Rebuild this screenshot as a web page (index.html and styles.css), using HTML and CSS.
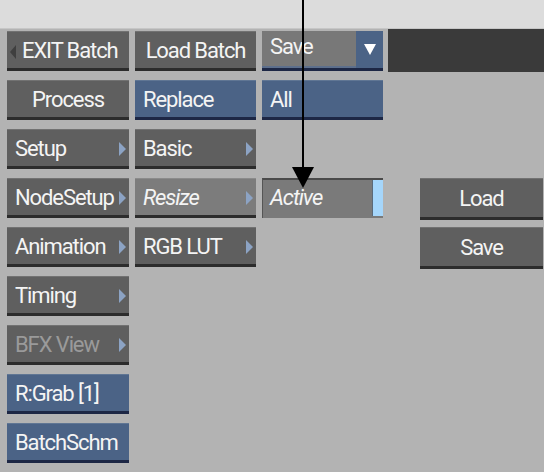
FILE: index.html
```html
<!DOCTYPE html>
<html>
<head>
<meta charset="utf-8">
<link rel="stylesheet" href="styles.css">
</head>
<body>
<div class="topbar"></div>
<div class="panel">
  <div class="btn gray exit"><span class="ltri"></span>EXIT Batch</div>
  <div class="btn gray center">Load Batch</div>
  <div class="dropdown"><span class="dd-field">Save</span><span class="dd-btn"><span class="dtri"></span></span></div>
  <div class="darkbox"></div>

  <div class="btn gray center">Process</div>
  <div class="btn blue">Replace</div>
  <div class="btn blue">All</div>
  <div class="empty"></div>

  <div class="btn gray menu">Setup<span class="rtri"></span></div>
  <div class="btn gray menu">Basic<span class="rtri"></span></div>
  <div class="empty"></div>
  <div class="empty"></div>

  <div class="btn gray menu">NodeSetup<span class="rtri"></span></div>
  <div class="btn light menu italic">Resize<span class="rtri"></span></div>
  <div class="field italic">Active<span class="bar"></span></div>
  <div class="side"><div class="btn gray center sidebtn">Load</div></div>

  <div class="btn gray menu">Animation<span class="rtri"></span></div>
  <div class="btn gray menu">RGB LUT<span class="rtri"></span></div>
  <div class="empty"></div>
  <div class="side"><div class="btn gray center sidebtn">Save</div></div>

  <div class="btn gray menu">Timing<span class="rtri"></span></div>
  <div class="empty"></div><div class="empty"></div><div class="empty"></div>

  <div class="btn gray menu disabled">BFX View<span class="rtri"></span></div>
  <div class="empty"></div><div class="empty"></div><div class="empty"></div>

  <div class="btn blue">R:Grab [1]</div>
  <div class="empty"></div><div class="empty"></div><div class="empty"></div>

  <div class="btn blue">BatchSchm</div>
</div>
<svg class="pointer" width="30" height="190" viewBox="0 0 30 190">
  <line x1="15" y1="0" x2="15" y2="170" stroke="#000" stroke-width="2"/>
  <polygon points="4,167 26,167 15,188" fill="#000"/>
</svg>
</body>
</html>
```
FILE: styles.css
```css
html, body {
  margin: 0;
  padding: 0;
}
body {
  width: 544px;
  height: 472px;
  background: #b3b3b3;
  font-family: Roboto, "Liberation Sans", Arial, sans-serif;
  position: relative;
  overflow: hidden;
}
.topbar {
  height: 28px;
  background: #dcdcdc;
  border-bottom: 1px solid #c6c6c6;
}
.panel {
  display: grid;
  grid-template-columns: 122px 121px 121px 1fr;
  grid-auto-rows: 40px;
  column-gap: 6px;
  row-gap: 9px;
  padding: 2px 0 0 7px;
}
.btn {
  box-sizing: border-box;
  height: 40px;
  display: flex;
  align-items: center;
  padding: 1px 0 0 8px;
  font-size: 22px;
  font-weight: 400;
  letter-spacing: -1.1px;
  color: #f4f4f4;
  border-top: 1px solid rgba(255,255,255,0.12);
  border-bottom: 3px solid #2c2c2c;
  position: relative;
}
.gray { background: #5f5f5f; }
.light { background: #7c7c7c; }
.blue {
  background: #4b6386;
  border-bottom-color: #1d2745;
}
.center {
  justify-content: center;
  padding-left: 0;
}
.exit { padding-left: 15px; }
.italic { font-style: italic; }
.disabled { color: #9a9a9a; }
.ltri {
  position: absolute;
  left: 3px;
  top: 13px;
  width: 0;
  height: 0;
  border-top: 7px solid transparent;
  border-bottom: 7px solid transparent;
  border-right: 6px solid #3f3f3f;
}
.rtri {
  position: absolute;
  right: 3px;
  top: 12px;
  width: 0;
  height: 0;
  border-top: 7px solid transparent;
  border-bottom: 7px solid transparent;
  border-left: 7px solid #8ca3c4;
}
.dropdown {
  display: flex;
  height: 40px;
  box-sizing: border-box;
  border-bottom: 3px solid #1d2745;
}
.dd-field {
  flex: 1;
  background: #787878;
  color: #f4f4f4;
  font-size: 22px;
  letter-spacing: -1.1px;
  padding: 3px 0 0 8px;
  border-bottom: 2px solid #5d6f8c;
}
.dd-btn {
  width: 27px;
  background: #4b6386;
  display: flex;
  align-items: center;
  justify-content: center;
}
.dtri {
  width: 0;
  height: 0;
  border-left: 6px solid transparent;
  border-right: 6px solid transparent;
  border-top: 11px solid #ffffff;
}
.darkbox {
  background: #3a3a3a;
  height: 43px;
  margin: -2px 0 0 -1px;
}
.field {
  box-sizing: border-box;
  height: 40px;
  background: #7a7a7a;
  border-top: 2px solid #4a4a4a;
  border-left: 1px solid #555;
  color: #f4f4f4;
  font-size: 22px;
  letter-spacing: -1.1px;
  display: flex;
  align-items: center;
  padding: 0 0 3px 7px;
  position: relative;
}
.bar {
  position: absolute;
  right: 0;
  top: 0;
  bottom: 2px;
  width: 10px;
  background: #a5d6fb;
  border-left: 1px solid #5a6a7a;
}
.side {
  padding-left: 31px;
}
.sidebtn {
  width: 123px;
  height: 42px;
}
.pointer {
  position: absolute;
  left: 288px;
  top: 0;
}
```
